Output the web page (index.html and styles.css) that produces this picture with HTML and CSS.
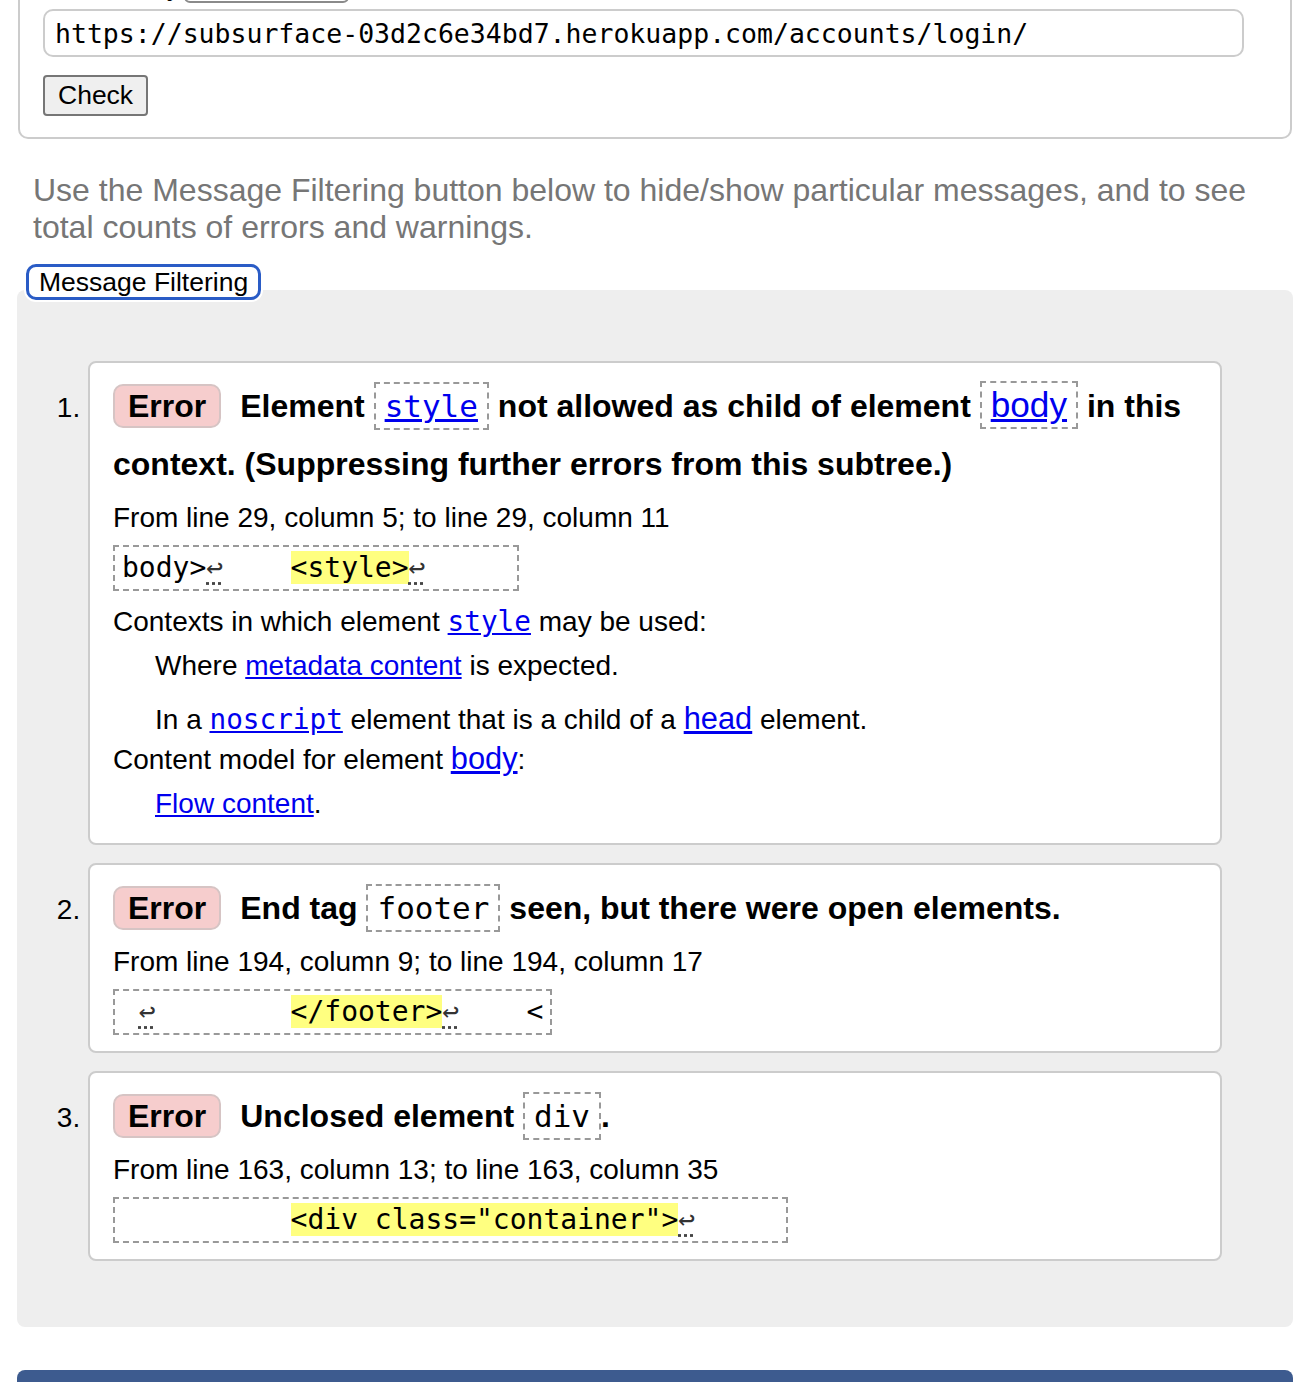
FILE: index.html
```html
<!DOCTYPE html>
<html lang="en">
<head>
<meta charset="utf-8">
<title>Nu Html Checker</title>
<link rel="stylesheet" href="styles.css">
</head>
<body>
<div class="page">
  <div class="checker">
    <div class="by-row"><span class="by-label">Check by</span><span class="select">address</span></div>
    <input class="url" type="text" value="https://subsurface-03d2c6e34bd7.herokuapp.com/accounts/login/">
    <button class="check" type="button">Check</button>
  </div>

  <p class="caption">Use the Message Filtering button below to hide/show particular messages, and to see total counts of errors and warnings.</p>

  <button class="filter" type="button">Message Filtering</button>

  <div class="results">
    <ol class="messages">
      <li class="msg">
        <p class="title"><strong class="badge">Error</strong>Element <code class="box mono"><a href="#">style</a></code> not allowed as child of element <code class="box sans"><a href="#">body</a></code> in this context. (Suppressing further errors from this subtree.)</p>
        <p class="loc">From line 29, column 5; to line 29, column 11</p>
        <p class="extract">body&gt;<span class="lf">↩</span>    <span class="hl">&lt;style&gt;</span><span class="lf">↩</span>     </p>
        <p class="info">Contexts in which element <a class="mono-link" href="#">style</a> may be used:</p>
        <p class="info indent">Where <a href="#">metadata content</a> is expected.</p>
        <p class="info indent gap">In a <a class="mono-link" href="#">noscript</a> element that is a child of a <a class="sans-link" href="#">head</a> element.</p>
        <p class="info tight">Content model for element <a class="sans-link" href="#">body</a>:</p>
        <p class="info indent last"><a href="#">Flow content</a>.</p>
      </li>
      <li class="msg">
        <p class="title"><strong class="badge">Error</strong>End tag <code class="box mono">footer</code> seen, but there were open elements.</p>
        <p class="loc">From line 194, column 9; to line 194, column 17</p>
        <p class="extract"> <span class="lf">↩</span>        <span class="hl">&lt;/footer&gt;</span><span class="lf">↩</span>    &lt;</p>
      </li>
      <li class="msg">
        <p class="title"><strong class="badge">Error</strong>Unclosed element <code class="box mono">div</code>.</p>
        <p class="loc">From line 163, column 13; to line 163, column 35</p>
        <p class="extract">          <span class="hl">&lt;div class="container"&gt;</span><span class="lf">↩</span>     </p>
      </li>
    </ol>
  </div>

  <div class="footer-bar"></div>
</div>
</body>
</html>
```

FILE: styles.css
```css
* {
  box-sizing: border-box;
}

body {
  margin: 0;
  background: #fff;
  color: #000;
  font-family: "Liberation Sans", Arial, sans-serif;
}

.page {
  padding: 0 15px 0 17px;
}

/* checker form */
.checker {
  margin: -62px 1px 0 1px;
  border: 2px solid #ccc;
  border-radius: 10px;
  padding: 15px 0 21px 23px;
}

.by-row {
  height: 48px;
  display: flex;
  align-items: flex-end;
  gap: 3px;
  padding-left: 21px;
}

.by-label {
  font-size: 28px;
  line-height: 34px;
}

.select {
  display: block;
  width: 165px;
  height: 40px;
  border: 2px solid #8a8a8a;
  border-radius: 6px;
  background: #fff;
  font-size: 26.5px;
  line-height: 36px;
  padding: 0 10px;
  color: #000;
}

.url {
  display: block;
  margin: 6px 0 0;
  width: 1201px;
  height: 48px;
  border: 2px solid #ccc;
  border-radius: 10px;
  padding: 0 10px;
  font-family: "DejaVu Sans Mono", "Liberation Mono", monospace;
  font-size: 26.5px;
  color: #000;
  background: #fff;
  outline: none;
}

.check {
  display: block;
  margin: 18px 0 0;
  height: 41px;
  padding: 0 13px;
  font-family: "Liberation Sans", Arial, sans-serif;
  font-size: 26.5px;
  color: #000;
  background: #efefef;
  border: 2px solid #767676;
  border-radius: 4px;
}

/* caption */
.caption {
  margin: 33px 0 0 16px;
  font-size: 32px;
  line-height: 37px;
  color: #767676;
}

.filter {
  position: relative;
  z-index: 1;
  display: block;
  margin: 18px 0 0 9px;
  height: 36px;
  padding: 0 10px;
  font-family: "Liberation Sans", Arial, sans-serif;
  font-size: 26.5px;
  line-height: 28px;
  color: #000;
  background: #fff;
  border: 3px solid #2a5cc6;
  border-radius: 10px;
  box-shadow: 0 0 0 2px #fff;
}

/* results */
.results {
  margin-top: -10px;
  background: #eee;
  border-radius: 8px;
  padding: 71px 71px 66px 71px;
}

.messages {
  margin: 0;
  padding: 0;
  list-style: decimal outside;
}

.msg {
  background: #fff;
  border: 2px solid #ccc;
  border-radius: 8px;
  padding: 14px 24px 16px 23px;
  margin-bottom: 18px;
  font-size: 28px;
}

.msg:last-child {
  margin-bottom: 0;
}

.msg p {
  margin: 0;
}

.title {
  font-weight: bold;
  font-size: 32px;
  line-height: 58px;
}

.badge {
  display: inline-block;
  background: #f6cdcd;
  border: 2px solid #d6c4c4;
  border-radius: 10px;
  padding: 2px 13px;
  line-height: 36px;
  margin-right: 19px;
}

.box {
  display: inline-block;
  font-weight: normal;
  border: 2px dashed #999;
  padding: 2px 9px;
  line-height: 40px;
}

.box.mono {
  font-family: "DejaVu Sans Mono", "Liberation Mono", monospace;
  font-size: 31px;
}

.box.sans {
  font-family: "Liberation Sans", Arial, sans-serif;
  font-size: 35.2px;
}

a {
  color: #0000ee;
  text-decoration: underline;
}

.mono-link {
  font-family: "DejaVu Sans Mono", "Liberation Mono", monospace;
  font-size: 27.7px;
  line-height: 20px;
}

.sans-link {
  font-size: 30.8px;
  line-height: 20px;
}

.loc {
  margin-top: 8px !important;
  line-height: 34px;
}

.extract {
  margin-top: 10px !important;
  width: fit-content;
  border: 2px dashed #999;
  padding: 3px 7px;
  font-family: "DejaVu Sans Mono", "Liberation Mono", monospace;
  font-size: 28px;
  line-height: 36px;
  white-space: pre;
}

.hl {
  background: #ffff80;
}

.lf {
  display: inline-block;
  width: 1ch;
  text-align: center;
  color: #333;
  text-decoration: underline dotted #444;
  text-underline-offset: 5px;
}

.info {
  line-height: 34px;
  margin-top: 14px !important;
}

.info.indent {
  margin-left: 42px;
  margin-top: 10px !important;
}

.info.indent.gap {
  margin-top: 20px !important;
}

.info.tight {
  margin-top: 6px !important;
}

.info.last {
  margin-bottom: 6px;
}

.footer-bar {
  margin-top: 43px;
  height: 60px;
  background: #3d5b8f;
  border-radius: 8px 8px 0 0;
}
```
